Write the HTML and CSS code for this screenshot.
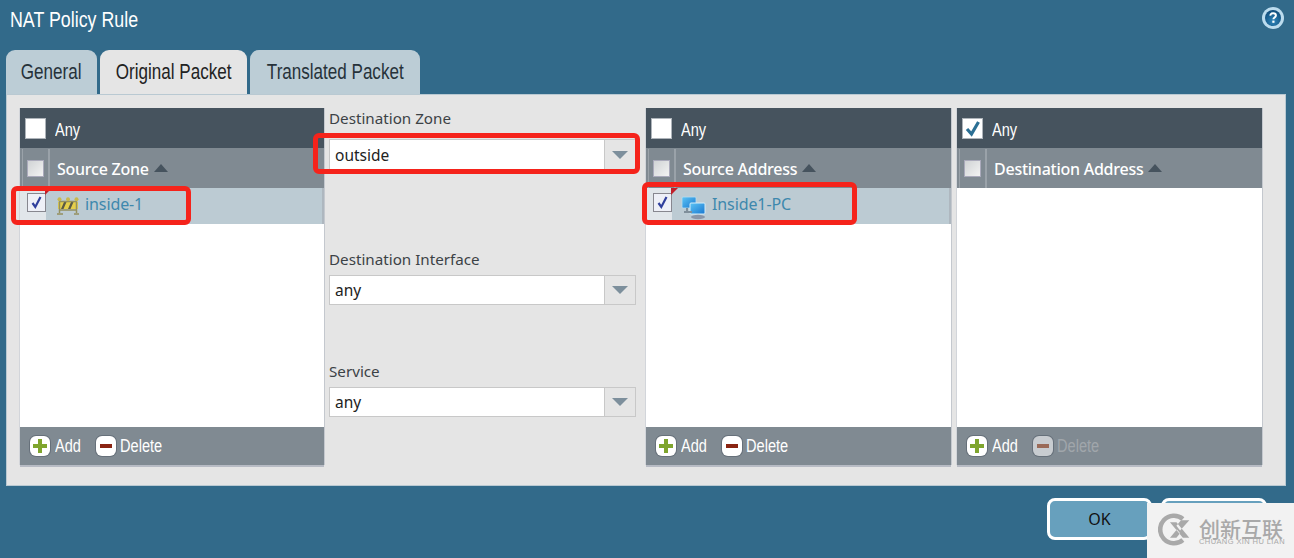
FILE: index.html
```html
<!DOCTYPE html>
<html lang="en">
<head>
<meta charset="utf-8">
<title>NAT Policy Rule</title>
<link rel="stylesheet" href="styles.css">
</head>
<body>
<div class="dialog">
  <header class="titlebar">
    <h1 class="title"><span class="narrow">NAT Policy Rule</span></h1>
    <svg class="help" width="24" height="24" viewBox="0 0 24 24" aria-hidden="true">
      <defs><radialGradient id="hg" cx="50%" cy="70%" r="70%"><stop offset="0" stop-color="#2f86ba"/><stop offset="1" stop-color="#0f4a78"/></radialGradient></defs>
      <circle cx="12" cy="12" r="11" fill="#bcdcee"/>
      <circle cx="12" cy="12" r="8" fill="url(#hg)"/>
      <path d="M9.200 9.600c.2-1.600 1.400-2.300 2.900-2.300 1.600 0 2.800.9 2.800 2.300 0 1.900-2.500 2-2.500 3.700" fill="none" stroke="#fff" stroke-width="2"/>
      <rect x="11.300" y="14.600" width="2.200" height="2.200" fill="#fff"/>
    </svg>
  </header>

  <nav class="tabs">
    <div class="tab tab-general"><span class="narrow-tab">General</span></div>
    <div class="tab tab-active"><span class="narrow-tab">Original Packet</span></div>
    <div class="tab tab-translated"><span class="narrow-tab">Translated Packet</span></div>
  </nav>

  <main class="panel">
    <section class="list list-first">
      <div class="any"><span class="box"></span><span class="narrow">Any</span></div>
      <div class="head"><span class="head-check"><span class="mini"></span></span><span class="head-label">Source Zone</span><span class="sort"></span></div>
      <div class="rows">
        <div class="row">
          <span class="row-check"><span class="tick-box"><svg width="17" height="17" viewBox="0 0 17 17"><path d="M4.500 9l2.800 4L12.500 3" fill="none" stroke="#2f3f9c" stroke-width="2.200"/></svg></span><i class="flag"></i></span>
          <svg class="row-icon" width="24" height="20" viewBox="0 0 24 20" aria-hidden="true">
            <rect x="2" y="6" width="20" height="7" fill="#e5cf4a"/>
            <path d="M5 13l3-7h2.500l-3 7zM12 13l3-7h2.500l-3 7z" fill="#5b5a45"/>
            <path d="M3.500 3v14M12 3v3M20.500 3v14M1 18h6M18 18h5M3 5.500h18M3 14h18" stroke="#94905f" stroke-width="1.500" fill="none"/>
            <circle cx="3.500" cy="3.200" r="2" fill="#c9b84e"/><circle cx="12" cy="3.200" r="2" fill="#c9b84e"/><circle cx="20.500" cy="3.200" r="2" fill="#c9b84e"/>
          </svg>
          <a class="link">inside-1</a>
        </div>
      </div>
      <div class="foot">
        <span class="action action-add"><span class="btn-icon"><i class="plus"></i></span><span class="narrow">Add</span></span>
        <span class="action"><span class="btn-icon"><i class="minus"></i></span><span class="narrow">Delete</span></span>
      </div>
    </section>

    <section class="middle">
      <div class="field field-zone">
        <label class="field-label">Destination Zone</label>
        <div class="select select-tall"><span class="select-value">outside</span><span class="select-arrow"><i></i></span></div>
      </div>
      <div class="field field-interface">
        <label class="field-label">Destination Interface</label>
        <div class="select"><span class="select-value">any</span><span class="select-arrow"><i></i></span></div>
      </div>
      <div class="field field-service">
        <label class="field-label">Service</label>
        <div class="select"><span class="select-value">any</span><span class="select-arrow"><i></i></span></div>
      </div>
    </section>

    <section class="list list-source">
      <div class="any"><span class="box"></span><span class="narrow">Any</span></div>
      <div class="head"><span class="head-check"><span class="mini"></span></span><span class="head-label">Source Address</span><span class="sort"></span></div>
      <div class="rows">
        <div class="row">
          <span class="row-check"><span class="tick-box"><svg width="17" height="17" viewBox="0 0 17 17"><path d="M4.500 9l2.800 4L12.500 3" fill="none" stroke="#2f3f9c" stroke-width="2.200"/></svg></span><i class="flag"></i></span>
          <svg class="row-icon" width="26" height="26" viewBox="0 0 26 26" aria-hidden="true">
            <defs><linearGradient id="scr" x1="0" y1="0" x2="1" y2="1"><stop offset="0" stop-color="#5cc4f5"/><stop offset="1" stop-color="#1a78d0"/></linearGradient></defs>
            <rect x="1" y="3" width="14" height="11" rx="1" fill="url(#scr)" stroke="#b8dcef" stroke-width=".8"/>
            <rect x="9" y="9" width="15" height="11" rx="1" fill="url(#scr)" stroke="#d5edf9"/>
            <path d="M6 14v4M3 18h8" stroke="#7f8f9a" stroke-width="2" fill="none"/>
            <ellipse cx="17" cy="23" rx="7" ry="2.200" fill="#8a96a8"/>
          </svg>
          <a class="link">Inside1-PC</a>
        </div>
      </div>
      <div class="foot">
        <span class="action action-add"><span class="btn-icon"><i class="plus"></i></span><span class="narrow">Add</span></span>
        <span class="action"><span class="btn-icon"><i class="minus"></i></span><span class="narrow">Delete</span></span>
      </div>
    </section>

    <section class="list list-dest">
      <div class="any"><span class="box"><svg width="20" height="20" viewBox="0 0 20 20"><path d="M4 10l4.500 5L15.500 3" fill="none" stroke="#2b6f94" stroke-width="3.200"/></svg></span><span class="narrow">Any</span></div>
      <div class="head"><span class="head-check"><span class="mini"></span></span><span class="head-label">Destination Address</span><span class="sort"></span></div>
      <div class="rows"></div>
      <div class="foot">
        <span class="action action-add"><span class="btn-icon"><i class="plus"></i></span><span class="narrow">Add</span></span>
        <span class="action action-off"><span class="btn-icon"><i class="minus"></i></span><span class="narrow">Delete</span></span>
      </div>
    </section>
  </main>

  <footer class="buttons">
    <div class="button button-ok">OK</div>
    <div class="button button-cancel"></div>
  </footer>
</div>

<div class="mark mark-zone"></div>
<div class="mark mark-dest"></div>
<div class="mark mark-addr"></div>

<aside class="watermark">
  <svg width="35" height="35" viewBox="0 0 38 38" aria-hidden="true">
    <path d="M27 7.500A15 15 0 1 0 27 30.500" fill="none" stroke="#a9a9a9" stroke-width="5"/>
    <path d="M13 11l7 0 14 17h-7zM34 9l-9 0-5 6 4 5zM13 28h7l4-5-3.500-4z" fill="#a9a9a9"/>
  </svg>
  <div class="mark-text">
    <div class="mark-cn">创新互联</div>
    <div class="mark-en">CHUANG XIN HU LIAN</div>
  </div>
</aside>
</body>
</html>
```
FILE: styles.css
```css
* { box-sizing: border-box; }
html, body { margin: 0; height: 558px; overflow: hidden; }
body { background: #326a8a; font-family: "Noto Sans", "Liberation Sans", sans-serif; color: #333; position: relative; }

.dialog { width: 1294px; height: 558px; display: flex; flex-direction: column; }

.narrow { display: inline-block; white-space: nowrap; transform: scaleX(.81); transform-origin: left center; }
.narrow-tab { display: block; flex: none; white-space: nowrap; transform: scaleX(.775); }

.titlebar { height: 50px; display: flex; justify-content: space-between; align-items: flex-start; padding: 6px 9px 0 10px; }
.title { margin: 0; font: 400 22px/28px "Liberation Sans", sans-serif; color: #fff; }

.tabs { height: 44px; display: flex; gap: 3px; padding-left: 6px; }
.tab { display: flex; justify-content: center; background: #bccdd6; border-radius: 9px 9px 0 0; font: 400 22px/44px "Liberation Sans", sans-serif; color: #26323a; overflow: hidden; }
.tab-general { width: 91px; }
.tab-active { width: 147px; background: #e5e5e5; color: #222; }
.tab-translated { width: 170px; }

.panel { margin-left: 6px; width: 1280px; height: 392px; background: #e5e5e5; border: 1px solid #b9c9d2; padding: 13px 0 0 13px; display: flex; align-items: flex-start; }

.list { width: 305px; height: 357px; display: flex; flex-direction: column; box-shadow: 0 2px 0 #b7bbc4, 1px 0 0 #c4c8ce, -1px 0 0 #d2d5da; }
.list-first { width: 304px; }
.list-source { margin-left: 10px; }
.list-dest { margin-left: 6px; }

.any { height: 40px; background: #46535e; color: #fff; display: flex; align-items: center; gap: 8.500px; padding: 3px 0 0 5px; font: 400 18px/20px "Liberation Sans", sans-serif; }
.box { width: 21px; height: 21px; background: #fff; border: 1px solid #aeb4ba; display: block; margin-top: -3px; flex: none; }
.box svg { display: block; }

.head { height: 40px; background: #808a92; color: #fff; display: flex; align-items: center; font-size: 16px; font-weight: 500; letter-spacing: -0.25px; padding-top: 1px; }
.head-check { width: 28px; height: 100%; margin: -1px 7px 0 2px; border-right: 2px solid #9aa2a9; border-left: 1px solid #9aa2a9; display: flex; align-items: center; justify-content: center; flex: none; }
.mini { width: 17px; height: 17px; background: linear-gradient(135deg, #d0d3d5, #f3f3f3); border: 1px solid #aab; display: block; }
.sort { width: 0; height: 0; margin-left: 5px; margin-top: -2px; border: 7px solid transparent; border-top-width: 0; border-bottom: 8px solid #46535e; }

.rows { flex: 1; background: #fff; }
.row { height: 36px; background: #bccbd3; display: flex; align-items: center; border-right: 2px solid #aeb7bf; }
.row-check { width: 26px; height: 100%; background: #e1e6ea; flex: none; position: relative; display: flex; padding: 5px 0 0 7px; }
.tick-box { width: 19px; height: 19px; background: #eef0f7; border: 1px solid #87878f; display: block; }
.tick-box svg { display: block; }
.flag { position: absolute; top: 0; right: -6px; border-top: 7px solid #c0202a; border-right: 7px solid transparent; }
.row-icon { margin: 0 5px 0 10px; flex: none; }
.link { color: #3e88ad; font-size: 16px; padding-bottom: 4px; letter-spacing: -0.1px; }
.list-source .row-icon { margin: 2px 5px 0 9px; }

.foot { height: 38px; background: #808a92; display: flex; align-items: center; padding: 0 0 0 10px; color: #fff; font: 400 18px/20px "Liberation Sans", sans-serif; }
.action { display: flex; align-items: center; gap: 4px; }
.action-add { width: 66px; gap: 5px; }
.btn-icon { width: 20px; height: 20px; border-radius: 6px; background: #fff; box-shadow: 0 0 0 1px #66707a; position: relative; display: block; flex: none; }
.plus { position: absolute; left: 3px; top: 8px; width: 14px; height: 4px; background: #7fa52e; }
.plus::after { content: ""; position: absolute; left: 5px; top: -5px; width: 4px; height: 14px; background: #7fa52e; }
.minus { position: absolute; left: 4px; top: 8px; width: 12px; height: 4px; background: #8a2412; }
.action-off { color: #a0a6ab; }
.action-off .btn-icon { background: #c8ccd0; }
.action-off .minus { background: #9a6a58; }

.middle { width: 307px; margin-left: 5px; display: flex; flex-direction: column; }
.field { display: flex; flex-direction: column; }
.field-label { font-size: 15.200px; line-height: 20px; color: #3c4246; }
.field-zone .field-label { margin-bottom: 11px; }
.field-interface { margin-top: 79px; }
.field-interface .field-label, .field-service .field-label { margin-bottom: 6px; }
.field-service { margin-top: 56px; }
.select { height: 30px; display: flex; background: #fff; border: 1px solid #c8c8c8; }
.select-tall { height: 31px; }
.select-value { flex: 1; font-size: 15.500px; line-height: 29px; padding-left: 5px; color: #222; }
.select-tall .select-value { line-height: 30px; }
.select-arrow { width: 31px; background: #e5e5e5; border-left: 1px solid #c8c8c8; display: flex; align-items: center; justify-content: center; }
.select-arrow i { width: 0; height: 0; border: 8px solid transparent; border-bottom-width: 0; border-top: 8px solid #7d8f9c; }

.buttons { display: flex; gap: 9px; padding: 12px 0 0 1047px; }
.button { width: 105px; height: 42px; border: 3px solid #fff; border-radius: 8px; background: #67a0bd; color: #111; font-size: 16px; line-height: 36px; text-align: center; }
.button-cancel { width: 106px; }

.mark { position: absolute; border: 5px solid #f5231b; border-radius: 6px; }
.mark-zone { left: 11px; top: 186px; width: 180px; height: 39px; }
.mark-dest { left: 313px; top: 133px; width: 327px; height: 41px; }
.mark-addr { left: 642px; top: 182px; width: 215px; height: 43px; }

.watermark { position: absolute; left: 1147px; top: 503px; width: 147px; height: 55px; background: #f2f2f2; display: flex; align-items: flex-start; padding: 9px 0 0 11px; gap: 6px; }
.mark-text { color: #a9a9a9; padding-top: 6px; }
.mark-cn { font: 500 21px/20px "Noto Sans CJK SC", sans-serif; }
.mark-en { font: 400 7.500px/8px "Liberation Sans", sans-serif; white-space: nowrap; letter-spacing: .4px; }
```
